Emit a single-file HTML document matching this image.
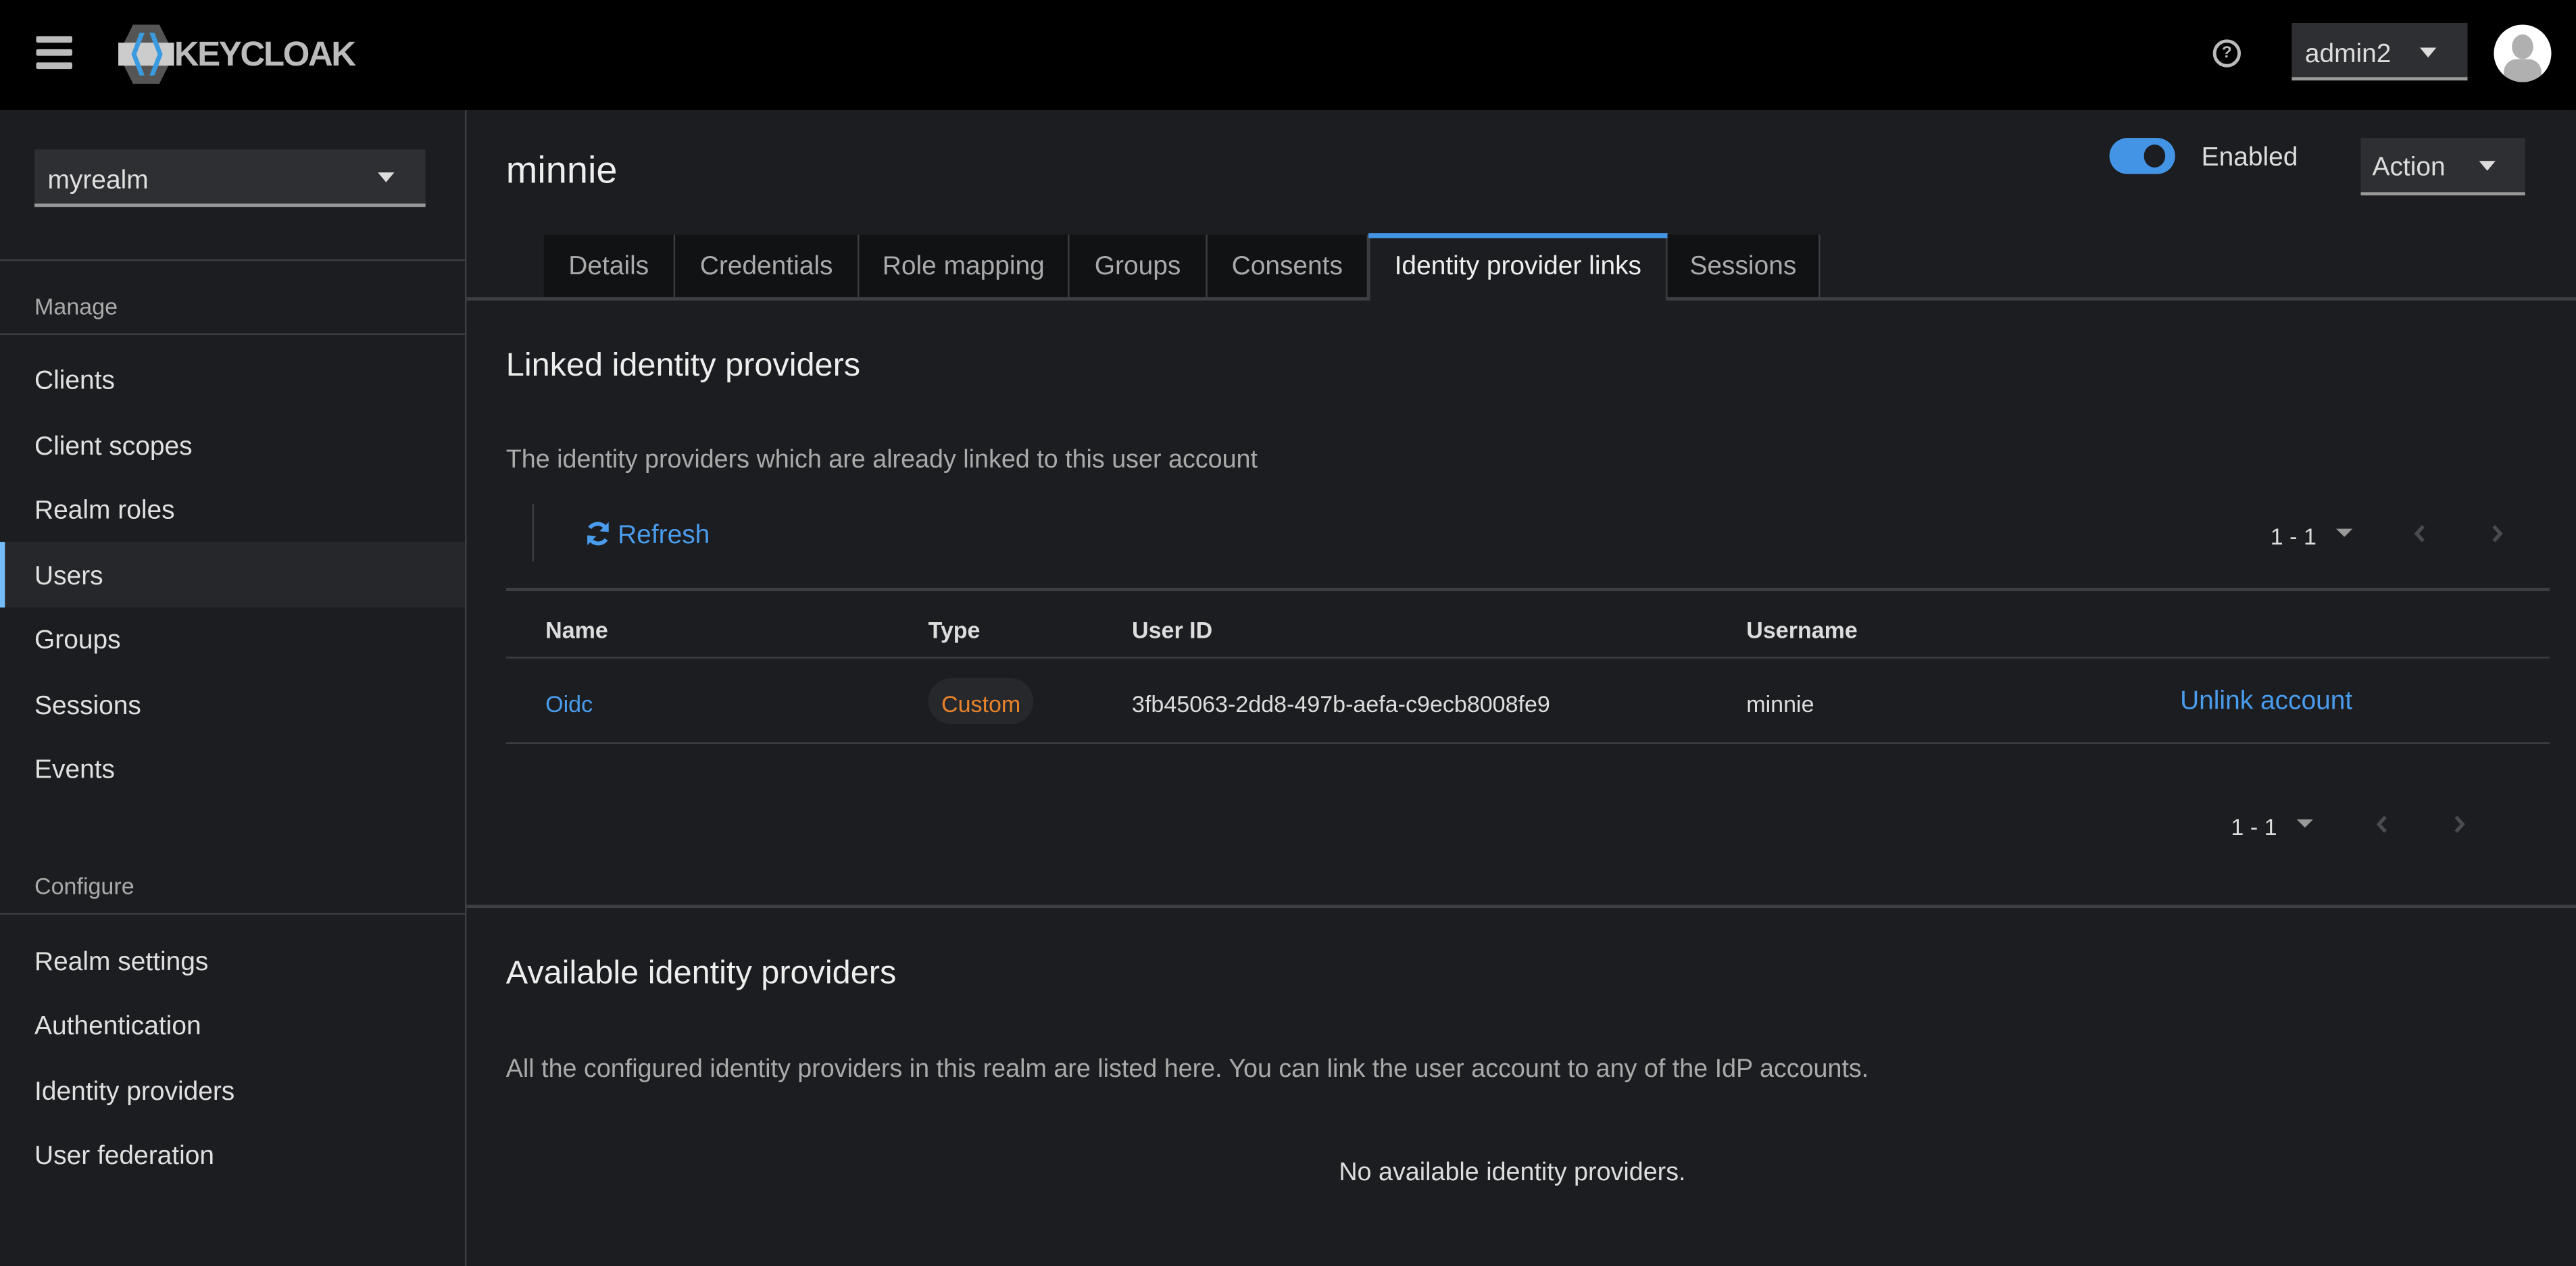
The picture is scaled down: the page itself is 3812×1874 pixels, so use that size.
<!DOCTYPE html>
<html><head><meta charset="utf-8"><style>
html,body{margin:0;padding:0;background:#1b1d21;overflow:hidden;width:3812px;height:1874px}
#w{position:absolute;left:0;top:0;width:1568px;height:771px;transform:scale(2.4311,2.4306);transform-origin:0 0;font-family:"Liberation Sans",sans-serif;color:#e0e0e0;background:#1b1d21}
.a{position:absolute;white-space:nowrap}
.nav{position:absolute;left:21px;font-size:16px;color:#e0e0e0;transform:translateY(-40%)}
.t{transform:translateY(-40%)}
.tab{position:absolute;top:143px;height:38px;background:#111214;border-right:1px solid #3c3f42;color:#aaa;font-size:16px;line-height:40px;text-align:center;box-sizing:border-box}
.hl{position:absolute;height:1px;background:#3c3f42}
</style></head><body><div id="w">
<!-- header -->
<div class="a" style="left:0;top:0;width:1568px;height:67px;background:#000"></div>
<div class="a" style="left:22px;top:22px;width:22px;height:4px;background:#bbb;border-radius:1px"></div>
<div class="a" style="left:22px;top:30px;width:22px;height:4px;background:#bbb;border-radius:1px"></div>
<div class="a" style="left:22px;top:38px;width:22px;height:4px;background:#bbb;border-radius:1px"></div>
<svg class="a" style="left:72px;top:15px" width="34" height="36" viewBox="0 0 34 36"><polygon points="9,0 25,0 34,18 25,36 9,36 0,18" fill="#555"/><rect x="0" y="11" width="34" height="14" fill="#ccc"/><polygon points="13,5 8,18 13,31 16,31 11,18 16,5" fill="#3a9be0"/><polygon points="19,5 24,18 19,31 22,31 27,18 22,5" fill="#3a9be0"/></svg>
<div class="a" style="left:106px;top:20px;font-size:21px;font-weight:bold;color:#bbb;letter-spacing:-1px;line-height:28px">KEYCLOAK</div>
<div class="a" style="left:1347px;top:24px;width:13px;height:13px;border:2px solid #bbb;border-radius:50%;font-size:10px;font-weight:bold;color:#bbb;text-align:center;line-height:13px">?</div>
<div class="a" style="left:1395px;top:14px;width:107px;height:33px;background:#2e2f32;border-bottom:2px solid #999"></div>
<div class="a t" style="left:1403px;top:32px;font-size:16px;color:#ddd">admin2</div>
<div class="a" style="left:1473px;top:29px;width:0;height:0;border-left:5px solid transparent;border-right:5px solid transparent;border-top:6px solid #ddd"></div>
<div class="a" style="left:1518px;top:15px;width:35px;height:35px;border-radius:50%;background:#fff;overflow:hidden"><div class="a" style="left:11px;top:6px;width:13px;height:15px;border-radius:50%;background:#b0b0b0"></div><div class="a" style="left:6px;top:21px;width:23px;height:20px;border-radius:8px 8px 0 0;background:#b0b0b0"></div></div>
<!-- sidebar -->
<div class="a" style="left:283px;top:67px;width:1px;height:704px;background:#3c3f42"></div>
<div class="a" style="left:21px;top:91px;width:238px;height:33px;background:#2e2f32;border-bottom:2px solid #999"></div>
<div class="nav" style="left:29px;top:109px">myrealm</div>
<div class="a" style="left:230px;top:105px;width:0;height:0;border-left:5px solid transparent;border-right:5px solid transparent;border-top:6px solid #ddd"></div>
<div class="hl" style="left:0;top:158px;width:283px"></div>
<div class="nav" style="top:185px;font-size:14px;color:#aaa">Manage</div>
<div class="hl" style="left:0;top:203px;width:283px"></div>
<div class="nav" style="top:231px">Clients</div>
<div class="nav" style="top:271px">Client scopes</div>
<div class="nav" style="top:310px">Realm roles</div>
<div class="a" style="left:0;top:330px;width:283px;height:40px;background:#25272b"></div>
<div class="a" style="left:0;top:330px;width:3px;height:40px;background:#73bcf7"></div>
<div class="nav" style="top:350px">Users</div>
<div class="nav" style="top:389px">Groups</div>
<div class="nav" style="top:429px">Sessions</div>
<div class="nav" style="top:468px">Events</div>
<div class="nav" style="top:538px;font-size:14px;color:#aaa">Configure</div>
<div class="hl" style="left:0;top:556px;width:283px"></div>
<div class="nav" style="top:585px">Realm settings</div>
<div class="nav" style="top:624px">Authentication</div>
<div class="nav" style="top:664px">Identity providers</div>
<div class="nav" style="top:703px">User federation</div>
<!-- main header -->
<div class="a t" style="left:308px;top:101px;font-size:23px;font-weight:500;color:#eee">minnie</div>
<div class="a" style="left:1284px;top:84px;width:40px;height:22px;border-radius:11px;background:#4394e5"></div>
<div class="a" style="left:1305px;top:88px;width:13px;height:14px;border-radius:50%;background:#1b1d21"></div>
<div class="a t" style="left:1340px;top:95px;font-size:16px;color:#ddd">Enabled</div>
<div class="a" style="left:1437px;top:84px;width:100px;height:33px;background:#2e2f32;border-bottom:2px solid #999"></div>
<div class="a t" style="left:1444px;top:101px;font-size:16px;color:#ddd">Action</div>
<div class="a" style="left:1509px;top:98px;width:0;height:0;border-left:5px solid transparent;border-right:5px solid transparent;border-top:6px solid #ddd"></div>
<!-- tabs -->
<div class="tab" style="left:331px;width:80px">Details</div>
<div class="tab" style="left:411px;width:112px">Credentials</div>
<div class="tab" style="left:523px;width:128px">Role mapping</div>
<div class="tab" style="left:651px;width:84px">Groups</div>
<div class="tab" style="left:735px;width:98px">Consents</div>
<div class="tab" style="left:833px;width:182px;background:#1b1d21;color:#eee;border-left:1px solid #3c3f42;height:40px;z-index:2">Identity provider links</div>
<div class="a" style="left:833px;top:142px;width:182px;height:3px;background:#4394e5;z-index:3"></div>
<div class="tab" style="left:1015px;width:93px">Sessions</div>
<div class="a" style="left:284px;top:181px;width:1284px;height:2px;background:#3c3f42"></div>
<!-- linked -->
<div class="a t" style="left:308px;top:221px;font-size:20px;font-weight:500;color:#eee">Linked identity providers</div>
<div class="a t" style="left:308px;top:279px;font-size:15.5px;color:#aaa">The identity providers which are already linked to this user account</div>
<div class="a" style="left:324px;top:307px;width:1px;height:35px;background:#3c3f42"></div>
<svg class="a" style="left:356px;top:317px" width="16" height="16" viewBox="0 0 16 16"><path d="M13.5 6A6 6 0 0 0 3 4.5M2.5 10A6 6 0 0 0 13 11.5" fill="none" stroke="#4a9cec" stroke-width="2.4"/><polygon points="14.5,1 14.5,7 9,6.5" fill="#4a9cec"/><polygon points="1.5,15 1.5,9 7,9.5" fill="#4a9cec"/></svg>
<div class="a t" style="left:376px;top:325px;font-size:16px;color:#4a9cec">Refresh</div>
<div class="a t" style="left:1382px;top:325px;font-size:14px;color:#ddd">1 - 1</div>
<div class="a" style="left:1422px;top:322px;border-left:5px solid transparent;border-right:5px solid transparent;border-top:5px solid #999"></div>
<svg class="a" style="left:1469px;top:319px" width="8" height="12" viewBox="0 0 8 12"><path d="M6 1.5L2 6l4 4.5" fill="none" stroke="#4a4b4e" stroke-width="2.2"/></svg>
<svg class="a" style="left:1516px;top:319px" width="8" height="12" viewBox="0 0 8 12"><path d="M2 1.5L6 6l-4 4.5" fill="none" stroke="#4a4b4e" stroke-width="2.2"/></svg>
<div class="a" style="left:308px;top:358px;width:1244px;height:2px;background:#3c3f42"></div>
<div class="a t" style="left:332px;top:382px;font-size:14px;font-weight:bold;color:#ddd">Name</div>
<div class="a t" style="left:565px;top:382px;font-size:14px;font-weight:bold;color:#ddd">Type</div>
<div class="a t" style="left:689px;top:382px;font-size:14px;font-weight:bold;color:#ddd">User ID</div>
<div class="a t" style="left:1063px;top:382px;font-size:14px;font-weight:bold;color:#ddd">Username</div>
<div class="hl" style="left:308px;top:400px;width:1244px"></div>
<div class="a t" style="left:332px;top:427px;font-size:14px;color:#4a9cec">Oidc</div>
<div class="a" style="left:565px;top:413px;width:64px;height:28px;border-radius:14px;background:#26282c"></div>
<div class="a t" style="left:573px;top:427px;font-size:14px;color:#e8832a">Custom</div>
<div class="a t" style="left:689px;top:427px;font-size:14px;color:#ddd">3fb45063-2dd8-497b-aefa-c9ecb8008fe9</div>
<div class="a t" style="left:1063px;top:427px;font-size:14px;color:#ddd">minnie</div>
<div class="a t" style="left:1327px;top:426px;font-size:16px;color:#4a9cec">Unlink account</div>
<div class="hl" style="left:308px;top:452px;width:1244px"></div>
<div class="a t" style="left:1358px;top:502px;font-size:14px;color:#ddd">1 - 1</div>
<div class="a" style="left:1398px;top:499px;border-left:5px solid transparent;border-right:5px solid transparent;border-top:5px solid #999"></div>
<svg class="a" style="left:1446px;top:496px" width="8" height="12" viewBox="0 0 8 12"><path d="M6 1.5L2 6l4 4.5" fill="none" stroke="#4a4b4e" stroke-width="2.2"/></svg>
<svg class="a" style="left:1493px;top:496px" width="8" height="12" viewBox="0 0 8 12"><path d="M2 1.5L6 6l-4 4.5" fill="none" stroke="#4a4b4e" stroke-width="2.2"/></svg>
<div class="a" style="left:284px;top:551px;width:1284px;height:2px;background:#3c3f42"></div>
<!-- available -->
<div class="a t" style="left:308px;top:591px;font-size:20px;font-weight:500;color:#eee">Available identity providers</div>
<div class="a t" style="left:308px;top:650px;font-size:15.5px;color:#aaa">All the configured identity providers in this realm are listed here. You can link the user account to any of the IdP accounts.</div>
<div class="a t" style="left:815px;top:713px;font-size:15.5px;color:#ddd">No available identity providers.</div>
</div></body></html>
